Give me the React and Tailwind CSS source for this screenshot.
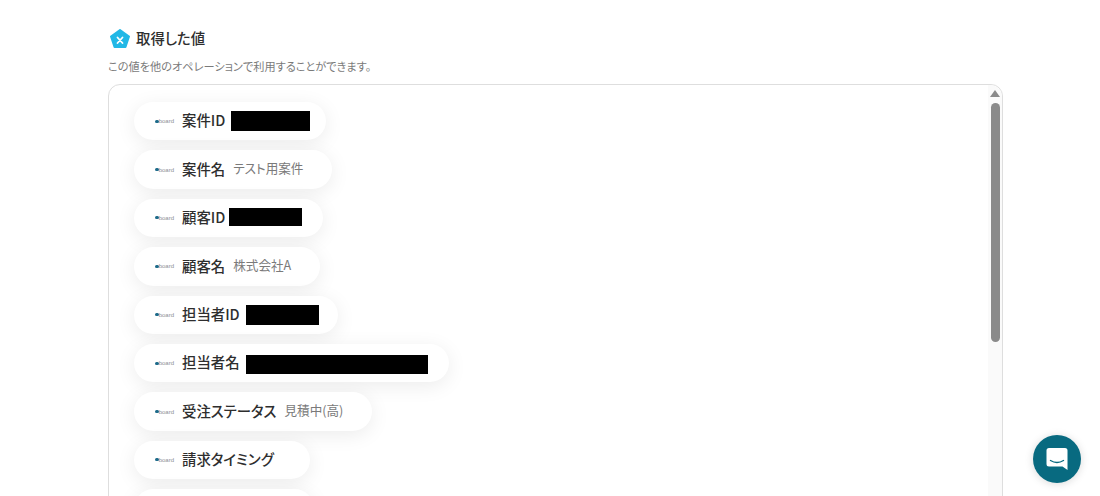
import React from 'react';

const rows = [
  { label: '案件ID', block: 'ml-[-2px] mr-[-13px] w-[79px] h-5' },
  { label: '案件名', value: 'テスト用案件' },
  { label: '顧客ID', block: 'ml-[-4px] mr-[-8px] w-[73px] h-[18px] -translate-y-px' },
  { label: '顧客名', value: '株式会社A' },
  { label: '担当者ID', block: 'ml-[-2px] mr-[-9px] w-[73px] h-5' },
  { label: '担当者名', block: 'ml-[-2px] mr-[-7px] w-[182px] h-[19px] translate-y-px' },
  { label: '受注ステータス', value: '見積中(高)' },
  { label: '請求タイミング', value: '' },
];

const BoardLogo = () => (
  <div className="flex w-5 items-center pl-px">
    <span className="h-[3px] w-[6px] rounded-full bg-[#1d6a8a]" />
    <span className="text-[6px] leading-none text-[#8b8f96] font-['Liberation_Sans',sans-serif]">board</span>
  </div>
);

const ValuePill = ({ row }) => (
  <div className="flex h-[38.4px] w-fit items-center gap-2 rounded-full bg-white pl-5 pr-[28.6px] shadow-[0_4px_20px_rgba(0,0,0,0.08)]">
    <BoardLogo />
    <span className="-translate-y-px text-[14.4px] font-medium text-[#2e2e2e]">{row.label}</span>
    {row.block ? (
      <span className={`bg-black ${row.block}`} />
    ) : (
      <span className="-translate-y-px text-[12.6px] text-[#7a7a7a]">{row.value}</span>
    )}
  </div>
);

export default function App() {
  return (
    <div className="h-[496px] overflow-hidden bg-white pl-[108px] pr-[97px] pt-[28px] font-['Noto_Sans_CJK_JP',sans-serif] [font-feature-settings:'palt']">
      <div className="flex h-[21px] items-center gap-[6px] pl-[2px]">
        <svg width="20" height="20" viewBox="0 0 20 20">
          <path d="M10 1 19 7.500 15.500 18H4.500L1 7.500Z" fill="#22b8e6" stroke="#22b8e6" strokeLinejoin="round" strokeWidth="2" />
          <path d="M7.500 8.500 12.500 14M12.500 8.500 7.500 14" stroke="#fff" strokeWidth="1.800" strokeLinecap="round" />
        </svg>
        <span className="text-[14.4px] font-medium leading-none text-[#2e2e2e]">取得した値</span>
      </div>
      <p className="mt-[9px] h-[17px] text-[11.2px] leading-[17px] text-[#7a7a7a]">この値を他のオペレーションで利用することができます。</p>
      <div className="relative mt-[9px] h-[500px] rounded-t-xl border border-[#dedede] pl-[25px] pt-[17px]">
        <div className="flex flex-col gap-[10px]">
          {rows.map((row) => (
            <ValuePill key={row.label} row={row} />
          ))}
          {/* next pill, only its top edge is on screen */}
          <div className="h-[38.4px] w-[180px] rounded-full bg-white shadow-[0_4px_20px_rgba(0,0,0,0.08)]" />
        </div>
        {/* scrollbar */}
        <div className="absolute bottom-0 right-0 top-0 flex w-[14px] flex-col items-center rounded-tr-xl bg-[#fafafa] pt-[5px]">
          <div className="h-0 w-0 border-x-[5px] border-b-[7px] border-x-transparent border-b-[#8a8a8a]" />
          <div className="mt-[6px] h-[239px] w-[9px] rounded-full bg-[#8a8a8a]" />
        </div>
      </div>
      {/* chat launcher */}
      <div className="fixed bottom-[13px] right-[19px] flex h-12 w-12 items-center justify-center rounded-full bg-[#086a80] shadow-[0_1px_8px_rgba(0,0,0,0.15)]">
        <svg width="22" height="24" viewBox="0 0 22 24">
          <path d="M3 1h16a2.500 2.500 0 0 1 2.500 2.500V23l-5-3.500H3A2.500 2.500 0 0 1 .5 17V3.500A2.500 2.500 0 0 1 3 1Z" fill="#fff" />
          <path d="M4.500 13.500Q11 17.500 17.500 13.500" fill="none" stroke="#086a80" strokeWidth="1.400" strokeLinecap="round" />
        </svg>
      </div>
    </div>
  );
}
